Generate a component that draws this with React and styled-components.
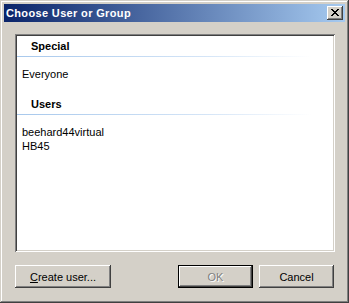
import React from "react";
import styled, { createGlobalStyle } from "styled-components";

const GlobalStyle = createGlobalStyle`
  html, body {
    margin: 0;
    padding: 0;
    background: #d4d0c8;
  }
  body {
    font-family: "Liberation Sans", Arial, sans-serif;
    font-size: 11px;
  }
`;

const Window = styled.div`
  box-sizing: border-box;
  width: 349px;
  height: 303px;
  padding: 4px;
  display: flex;
  flex-direction: column;
  background: #d4d0c8;
  box-shadow: inset -1px -1px #404040, inset 1px 1px #d4d0c8,
    inset -2px -2px #808080, inset 2px 2px #ffffff;
`;

const TitleBar = styled.div`
  height: 18px;
  flex: none;
  display: flex;
  align-items: center;
  justify-content: space-between;
  padding: 0 2px 0 2px;
  background: linear-gradient(to right, #0a246a, #a6caf0);
`;

const Title = styled.span`
  color: #fff;
  font-weight: bold;
  font-size: 11px;
  letter-spacing: 0.35px;
  line-height: 18px;
  white-space: nowrap;
`;

const CloseButton = styled.button`
  box-sizing: border-box;
  width: 16px;
  height: 14px;
  padding: 0 0 1px 0;
  margin: 0;
  border: none;
  display: flex;
  align-items: center;
  justify-content: center;
  background: #d4d0c8;
  box-shadow: inset -1px -1px #404040, inset 1px 1px #ffffff,
    inset -2px -2px #808080;
  svg {
    display: block;
  }
`;

const Client = styled.div`
  flex: 1;
  display: flex;
  flex-direction: column;
  padding: 12px 10px 11px 11px;
`;

const ListBox = styled.div`
  box-sizing: border-box;
  height: 218px;
  padding: 2px;
  background: #fff;
  color: #000;
  box-shadow: inset 1px 1px #808080, inset -1px -1px #ffffff,
    inset 2px 2px #404040, inset -2px -2px #d4d0c8;
`;

const GroupHeader = styled.div`
  padding: 3px 0 3px 14px;
  line-height: 14px;
  font-weight: bold;
  border-bottom: 1px solid transparent;
  border-image: linear-gradient(to right, #a7c8ec, #d5e5f7 60%, #ffffff 93%) 1;
`;

const Items = styled.div`
  padding: 10px 0 13px 5px;
`;

const Item = styled.div`
  line-height: 14px;
  white-space: nowrap;
`;

const Footer = styled.div`
  display: flex;
  align-items: center;
  margin-top: 13px;
  padding-right: 1px;
`;

const Spacer = styled.div`
  flex: 1;
`;

const Button = styled.button`
  box-sizing: border-box;
  width: ${(p) => p.$width || 75}px;
  height: 23px;
  margin: 0 0 0 ${(p) => p.$gap || 0}px;
  padding: 0;
  font-family: "Liberation Sans", Arial, sans-serif;
  font-size: 11px;
  color: ${(p) => (p.disabled ? "#808080" : "#000")};
  text-shadow: ${(p) => (p.disabled ? "1px 1px #ffffff" : "none")};
  background: #d4d0c8;
  border: ${(p) => (p.$default ? "1px solid #000" : "none")};
  box-shadow: inset -1px -1px #404040, inset 1px 1px #ffffff,
    inset -2px -2px #808080;
  u {
    text-decoration: underline;
  }
`;

function CloseGlyph() {
  const rows = [
    [0, 1, 6, 7],
    [1, 2, 5, 6],
    [2, 3, 4, 5],
    [3, 4],
    [2, 3, 4, 5],
    [1, 2, 5, 6],
    [0, 1, 6, 7],
  ];
  return (
    <svg width="8" height="7" viewBox="0 0 8 7" shapeRendering="crispEdges">
      {rows.map((cols, y) =>
        cols.map((x) => <rect key={`${x}-${y}`} x={x} y={y} width="1" height="1" fill="#000" />)
      )}
    </svg>
  );
}

const groups = [
  { title: "Special", items: ["Everyone"] },
  { title: "Users", items: ["beehard44virtual", "HB45"] },
];

export default function App() {
  return (
    <>
      <GlobalStyle />
      <Window>
        <TitleBar>
          <Title>Choose User or Group</Title>
          <CloseButton aria-label="Close">
            <CloseGlyph />
          </CloseButton>
        </TitleBar>
        <Client>
          <ListBox>
            {groups.map((g) => (
              <div key={g.title}>
                <GroupHeader>{g.title}</GroupHeader>
                <Items>
                  {g.items.map((it) => (
                    <Item key={it}>{it}</Item>
                  ))}
                </Items>
              </div>
            ))}
          </ListBox>
          <Footer>
            <Button $width={96}>
              <u>C</u>reate user...
            </Button>
            <Spacer />
            <Button $default disabled>
              OK
            </Button>
            <Button $gap={6}>Cancel</Button>
          </Footer>
        </Client>
      </Window>
    </>
  );
}
